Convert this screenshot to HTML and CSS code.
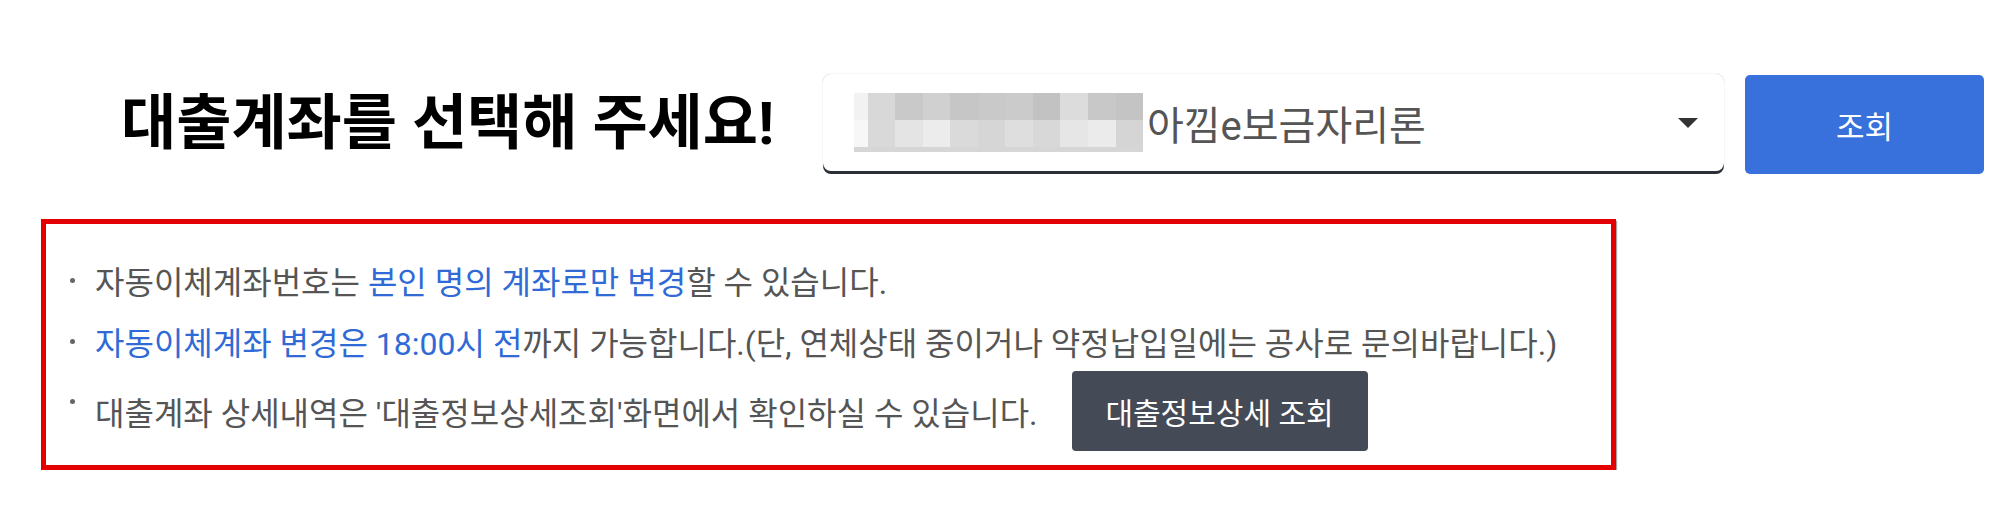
FILE: index.html
```html
<!DOCTYPE html>
<html lang="ko">
<head>
    <meta charset="UTF-8">
    <title>대출계좌 선택</title>
    <link rel="stylesheet" href="styles.css">
</head>
<body>
<div id="wrap">
    <div class="top">
        <h1 class="title">대출계좌를 선택해 주세요!</h1>
        <div class="select">
            <div class="mask">
                <div class="mask-row">
                    <span style="background:#f2f2f2"></span>
                    <span style="background:#d8d8d8"></span>
                    <span style="background:#c9c9c9"></span>
                    <span style="background:#d0d0d0"></span>
                    <span style="background:#c6c6c6"></span>
                    <span style="background:#c9c9c9"></span>
                    <span style="background:#cbcbcb"></span>
                    <span style="background:#c2c2c2"></span>
                    <span style="background:#dcdcdc"></span>
                    <span style="background:#c8c8c8"></span>
                    <span style="background:#c4c4c4"></span>
                </div>
                <div class="mask-row">
                    <span style="background:#f7f7f7"></span>
                    <span style="background:#d9d9d9"></span>
                    <span style="background:#e4e4e4"></span>
                    <span style="background:#ececec"></span>
                    <span style="background:#dadada"></span>
                    <span style="background:#d6d6d6"></span>
                    <span style="background:#dedede"></span>
                    <span style="background:#d8d8d8"></span>
                    <span style="background:#e6e6e6"></span>
                    <span style="background:#ebebeb"></span>
                    <span style="background:#d5d5d5"></span>
                </div>
                <div class="mask-foot"></div>
            </div>
            <span class="account">아낌e보금자리론</span>
            <span class="arrow"></span>
        </div>
        <button class="btn-search" type="button">조회</button>
    </div>
    <div class="notice">
        <ul>
            <li><span>자동이체계좌번호는 <em>본인 명의 계좌로만 변경</em>할 수 있습니다.</span></li>
            <li class="second"><span><em>자동이체계좌 변경은 18:00시 전</em>까지 가능합니다.(단, 연체상태 중이거나 약정납입일에는 공사로 문의바랍니다.)</span></li>
            <li class="third"><span>대출계좌 상세내역은 '대출정보상세조회'화면에서 확인하실 수 있습니다.</span><button class="btn-detail" type="button">대출정보상세 조회</button></li>
        </ul>
    </div>
</div>
</body>
</html>
```

FILE: styles.css
```css
body, h1, ul, li {
    margin: 0;
    padding: 0;
}

body {
    background: #fff;
    font-family: "Roboto", "Noto Sans CJK KR", sans-serif;
    color: #555;
}

#wrap {
    padding: 74px 0 0 41px;
}

.top {
    display: flex;
    align-items: center;
    width: 1863px;
    margin-left: 80px;
    height: 100px;
}

.title {
    flex: 1;
    font-size: 60px;
    font-weight: 700;
    color: #000;
    letter-spacing: 0;
    line-height: 1;
}

.select {
    width: 901px;
    height: 97px;
    box-sizing: border-box;
    display: flex;
    align-items: center;
    padding: 0 26px 0 31px;
    border-radius: 8px;
    background: #fff;
    box-shadow: 0 3px 0 #2b2f36, 0 0 1px rgba(0, 0, 0, 0.35);
    margin-bottom: 3px;
}

.mask {
    width: 289px;
    margin-right: 4px;
}

.mask-row {
    display: flex;
    height: 27px;
}

.mask-row span {
    flex: 1;
}

.mask-row span:first-child {
    flex: 0.5;
}

.mask-foot {
    height: 5px;
    background: #d6d6d6;
}

.account {
    flex: 1;
    font-size: 40px;
    color: #555;
}

.arrow {
    width: 0;
    height: 0;
    border-left: 10px solid transparent;
    border-right: 10px solid transparent;
    border-top: 10px solid #333;
}

.btn-search {
    width: 239px;
    height: 99px;
    margin-left: 21px;
    border: none;
    border-radius: 5px;
    background: #3870dc;
    color: #fff;
    font-family: "Roboto", "Noto Sans CJK KR", sans-serif;
    font-size: 31px;
}

.notice {
    width: 1575px;
    height: 251px;
    box-sizing: border-box;
    margin-top: 45px;
    border: 5px solid #e50000;
    box-shadow: 1px 2px 1px rgba(0, 0, 0, 0.35);
}

.notice ul {
    list-style: none;
    padding: 36px 0 0 24px;
}

.notice li {
    display: flex;
    align-items: center;
    height: 40px;
    font-size: 32px;
    white-space: nowrap;
}

.notice li::before {
    content: "";
    flex: none;
    width: 5px;
    height: 5px;
    border-radius: 50%;
    background: #666;
    margin-right: 20px;
}

.notice li.second {
    margin-top: 21px;
}

.notice li.third {
    margin-top: 10px;
    height: 80px;
}

.notice li.third::before {
    align-self: flex-start;
    margin-top: 28px;
}

.notice em {
    font-style: normal;
    color: #2f6ad6;
}

.btn-detail {
    width: 296px;
    height: 80px;
    margin-left: 34px;
    border: none;
    border-radius: 4px;
    background: #444a56;
    color: #fff;
    font-family: "Roboto", "Noto Sans CJK KR", sans-serif;
    font-size: 30px;
}
```
